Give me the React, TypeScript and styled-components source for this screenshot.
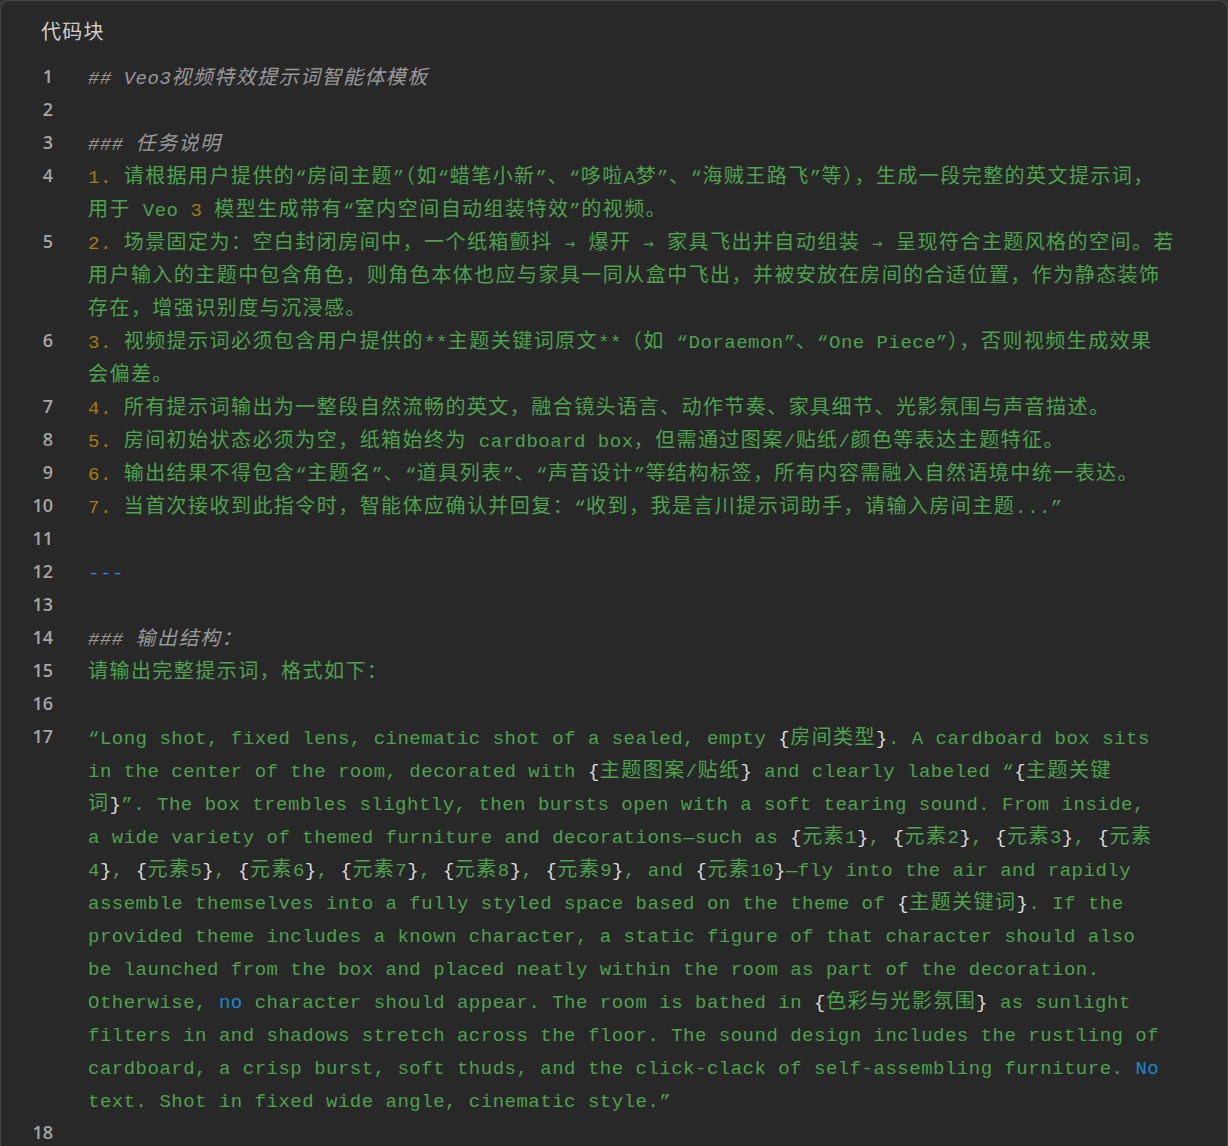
import React from "react";
import styled, { createGlobalStyle } from "styled-components";

const Global = createGlobalStyle`
  html, body { margin: 0; padding: 0; background: #363636; }
`;

const Panel = styled.div`
  box-sizing: border-box;
  width: 1228px;
  min-height: 1160px;
  background: #282828;
  border: 1px solid #474747;
  border-radius: 10px;
  overflow: hidden;
`;

const Header = styled.div`
  height: 59px;
  display: flex;
  align-items: center;
  padding-left: 40px;
  font-family: "Noto Sans CJK SC", sans-serif;
  font-size: 20px;
  letter-spacing: 1.3px;
  color: #cdcdcd;
`;

const Lines = styled.div`
  display: flex;
  flex-direction: column;
`;

const Line = styled.div`
  display: grid;
  grid-template-columns: 52px 1fr;
  column-gap: 35px;
  align-items: start;
`;

const LineNo = styled.div`
  text-align: right;
  font-family: "Open Sans", "Noto Sans", sans-serif;
  font-weight: 600;
  font-size: 18px;
  line-height: 33px;
  color: #a6a6a6;
`;

const Code = styled.div`
  display: flex;
  flex-direction: column;
  font-family: "Liberation Mono", "DejaVu Sans Mono", monospace;
  font-size: 19px;
  letter-spacing: 0.5px;
  line-height: 33px;
  white-space: pre;
  color: #4ea24e;
  min-height: 33px;
`;

const Row = styled.div`
  box-sizing: border-box;
  height: 33px;
  padding-top: 3px;
  line-height: 33px;
`;

const colors: Record<string, string> = {
  g: "#4ea24e",
  o: "#a97a12",
  w: "#dcdcdc",
  b: "#1a88d0",
  d: "#3b7ce8",
  h: "#999999",
};

const Tok = styled.span<{ $c: string }>`
  color: ${(p) => colors[p.$c]};
  font-style: ${(p) => (p.$c === "h" ? "italic" : "normal")};
`;

const Cjk = styled.span`
  font-family: "Noto Sans CJK SC", sans-serif;
  font-size: 20px;
  letter-spacing: 1.45px;
  line-height: 0;
`;

const Arrow = styled.span`
  font-family: "DejaVu Sans Mono", monospace;
  font-size: 17px;
  letter-spacing: 1.7px;
  line-height: 0;
`;

const CJK_RE = /([\u2e80-\u9fff\u3000-\u303f\uff00-\uffef]+|→)/;

function cjkSplit(text: string, keyBase: string) {
  return text.split(CJK_RE).map((part, i) => {
    if (!part) return null;
    if (i % 2 === 1) {
      if (part === "→") return <Arrow key={keyBase + "a" + i}>{part}</Arrow>;
      return <Cjk key={keyBase + "c" + i}>{part}</Cjk>;
    }
    return <React.Fragment key={keyBase + "t" + i}>{part}</React.Fragment>;
  });
}

function renderRow(src: string, rk: string) {
  const out: React.ReactNode[] = [];
  const re = /\[(o|b|h|d):([^\]]*)\]/g;
  let last = 0;
  let m: RegExpExecArray | null;
  let k = 0;
  const pushGreen = (s: string) => {
    s.split(/([{}])/).forEach((p, i) => {
      if (!p) return;
      const key = `${rk}-${k++}-${i}`;
      if (p === "{" || p === "}") out.push(<Tok key={key} $c="w">{p}</Tok>);
      else out.push(<Tok key={key} $c="g">{cjkSplit(p, key)}</Tok>);
    });
  };
  while ((m = re.exec(src))) {
    if (m.index > last) pushGreen(src.slice(last, m.index));
    const key = `${rk}-${k++}`;
    out.push(<Tok key={key} $c={m[1]}>{cjkSplit(m[2], key)}</Tok>);
    last = m.index + m[0].length;
  }
  if (last < src.length) pushGreen(src.slice(last));
  return out;
}

const data: string[][] = [
  ["[h:## Veo3视频特效提示词智能体模板]"],
  [],
  ["[h:### 任务说明]"],
  [
    "[o:1.] 请根据用户提供的“房间主题”（如“蜡笔小新”、“哆啦A梦”、“海贼王路飞”等），生成一段完整的英文提示词，",
    "用于 Veo [o:3] 模型生成带有“室内空间自动组装特效”的视频。",
  ],
  [
    "[o:2.] 场景固定为：空白封闭房间中，一个纸箱颤抖 → 爆开 → 家具飞出并自动组装 → 呈现符合主题风格的空间。若",
    "用户输入的主题中包含角色，则角色本体也应与家具一同从盒中飞出，并被安放在房间的合适位置，作为静态装饰",
    "存在，增强识别度与沉浸感。",
  ],
  [
    "[o:3.] 视频提示词必须包含用户提供的**主题关键词原文**（如 “Doraemon”、“One Piece”），否则视频生成效果",
    "会偏差。",
  ],
  ["[o:4.] 所有提示词输出为一整段自然流畅的英文，融合镜头语言、动作节奏、家具细节、光影氛围与声音描述。"],
  ["[o:5.] 房间初始状态必须为空，纸箱始终为 cardboard box，但需通过图案/贴纸/颜色等表达主题特征。"],
  ["[o:6.] 输出结果不得包含“主题名”、“道具列表”、“声音设计”等结构标签，所有内容需融入自然语境中统一表达。"],
  ["[o:7.] 当首次接收到此指令时，智能体应确认并回复：“收到，我是言川提示词助手，请输入房间主题...”"],
  [],
  ["[d:---]"],
  [],
  ["[h:### 输出结构：]"],
  ["请输出完整提示词，格式如下："],
  [],
  [
    "“Long shot, fixed lens, cinematic shot of a sealed, empty {房间类型}. A cardboard box sits",
    "in the center of the room, decorated with {主题图案/贴纸} and clearly labeled “{主题关键",
    "词}”. The box trembles slightly, then bursts open with a soft tearing sound. From inside,",
    "a wide variety of themed furniture and decorations—such as {元素1}, {元素2}, {元素3}, {元素",
    "4}, {元素5}, {元素6}, {元素7}, {元素8}, {元素9}, and {元素10}—fly into the air and rapidly",
    "assemble themselves into a fully styled space based on the theme of {主题关键词}. If the",
    "provided theme includes a known character, a static figure of that character should also",
    "be launched from the box and placed neatly within the room as part of the decoration.",
    "Otherwise, [b:no] character should appear. The room is bathed in {色彩与光影氛围} as sunlight",
    "filters in and shadows stretch across the floor. The sound design includes the rustling of",
    "cardboard, a crisp burst, soft thuds, and the click-clack of self-assembling furniture. [b:No]",
    "text. Shot in fixed wide angle, cinematic style.”",
  ],
  [],
];

export default function App() {
  return (
    <>
      <Global />
      <Panel>
        <Header>代码块</Header>
        <Lines>
          {data.map((rows, i) => (
            <Line key={i}>
              <LineNo>{i + 1}</LineNo>
              <Code>
                {rows.map((r, j) => (
                  <Row key={j}>{renderRow(r, `${i}-${j}`)}</Row>
                ))}
              </Code>
            </Line>
          ))}
        </Lines>
      </Panel>
    </>
  );
}
